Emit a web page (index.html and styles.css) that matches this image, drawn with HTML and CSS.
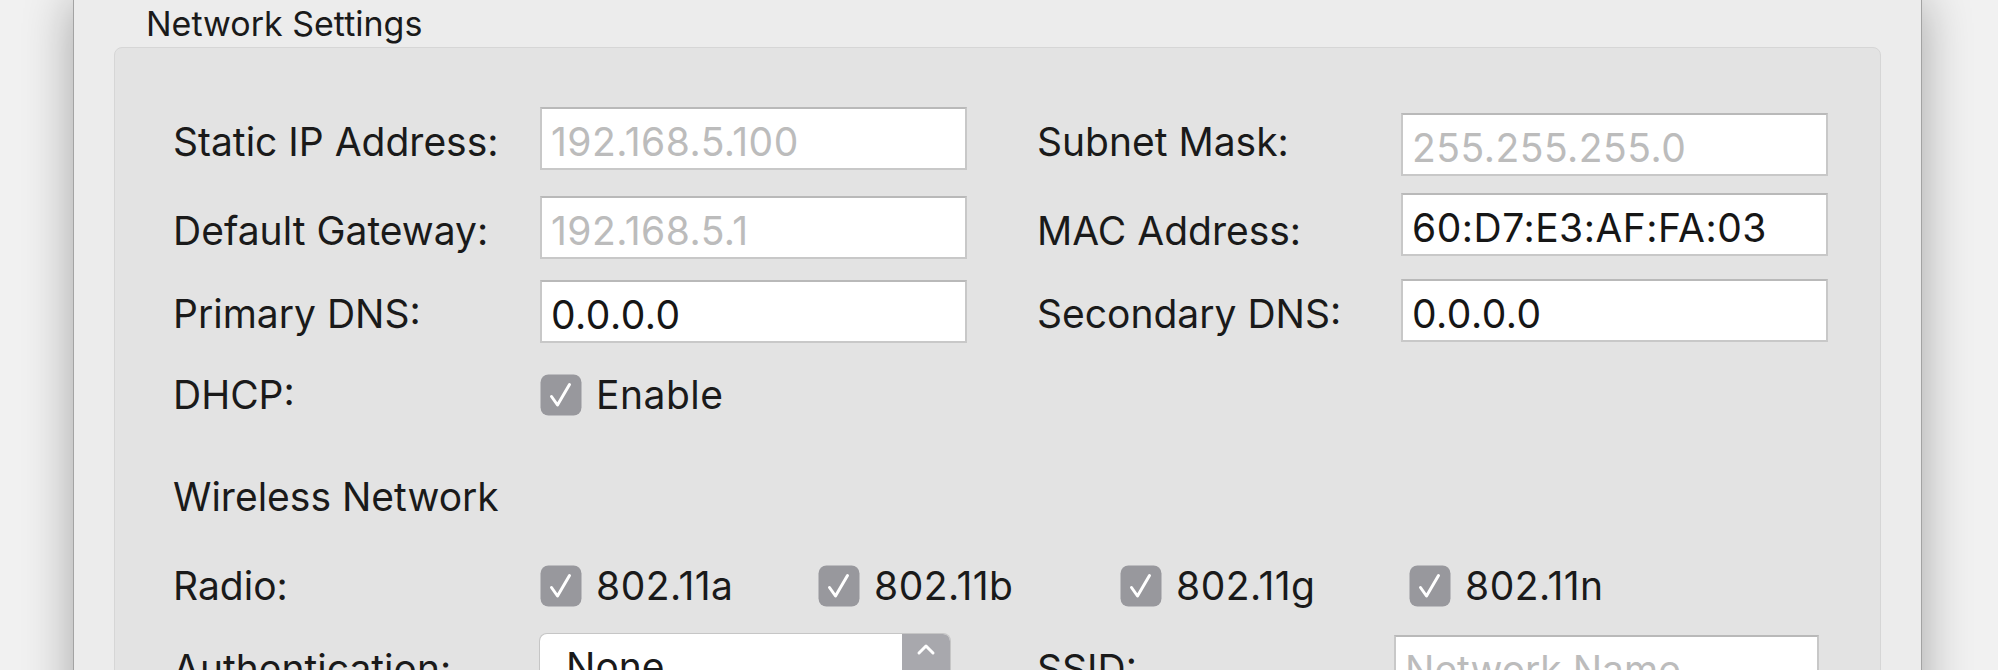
FILE: index.html
```html
<!DOCTYPE html>
<html>
<head>
<meta charset="utf-8">
<title>Network Settings</title>
<link rel="stylesheet" href="styles.css">
</head>
<body>
<div class="window">
  <div class="group-title">Network Settings</div>
  <div class="group">

    <div class="row row-1">
      <label class="label">Static IP Address:</label>
      <input class="field" type="text" placeholder="192.168.5.100">
      <label class="label label-right">Subnet Mask:</label>
      <input class="field down-6" type="text" placeholder="255.255.255.0">
    </div>

    <div class="row row-2">
      <label class="label">Default Gateway:</label>
      <input class="field down-3" type="text" placeholder="192.168.5.1">
      <label class="label label-right">MAC Address:</label>
      <input class="field" type="text" value="60:D7:E3:AF:FA:03">
    </div>

    <div class="row row-3">
      <label class="label">Primary DNS:</label>
      <input class="field down-1" type="text" value="0.0.0.0">
      <label class="label label-right">Secondary DNS:</label>
      <input class="field" type="text" value="0.0.0.0">
    </div>

    <div class="row row-dhcp">
      <label class="label">DHCP:</label>
      <div class="check">
        <svg class="box" width="42" height="42" viewBox="0 0 42 42"><rect x="0.5" y="0.5" width="41" height="41" rx="8" fill="#98989d"/><path d="M11.5 22.5 L17.5 31 L29.5 10.5" fill="none" stroke="#fff" stroke-width="3" stroke-linecap="round" stroke-linejoin="round"/></svg>
        <span>Enable</span>
      </div>
    </div>

    <div class="section">Wireless Network</div>

    <div class="row row-radio">
      <label class="label">Radio:</label>
      <div class="checks">
        <div class="check">
          <svg class="box" width="42" height="42" viewBox="0 0 42 42"><rect x="0.5" y="0.5" width="41" height="41" rx="8" fill="#98989d"/><path d="M11.5 22.5 L17.5 31 L29.5 10.5" fill="none" stroke="#fff" stroke-width="3" stroke-linecap="round" stroke-linejoin="round"/></svg>
          <span>802.11a</span>
        </div>
        <div class="check">
          <svg class="box" width="42" height="42" viewBox="0 0 42 42"><rect x="0.5" y="0.5" width="41" height="41" rx="8" fill="#98989d"/><path d="M11.5 22.5 L17.5 31 L29.5 10.5" fill="none" stroke="#fff" stroke-width="3" stroke-linecap="round" stroke-linejoin="round"/></svg>
          <span>802.11b</span>
        </div>
        <div class="check">
          <svg class="box" width="42" height="42" viewBox="0 0 42 42"><rect x="0.5" y="0.5" width="41" height="41" rx="8" fill="#98989d"/><path d="M11.5 22.5 L17.5 31 L29.5 10.5" fill="none" stroke="#fff" stroke-width="3" stroke-linecap="round" stroke-linejoin="round"/></svg>
          <span>802.11g</span>
        </div>
        <div class="check">
          <svg class="box" width="42" height="42" viewBox="0 0 42 42"><rect x="0.5" y="0.5" width="41" height="41" rx="8" fill="#98989d"/><path d="M11.5 22.5 L17.5 31 L29.5 10.5" fill="none" stroke="#fff" stroke-width="3" stroke-linecap="round" stroke-linejoin="round"/></svg>
          <span>802.11n</span>
        </div>
      </div>
    </div>

    <div class="row row-auth">
      <label class="label">Authentication:</label>
      <div class="select">
        <span class="select-value">None</span>
        <span class="stepper">
          <svg width="48" height="63" viewBox="0 0 48 63"><path d="M17 19 L24 12 L31 19" fill="none" stroke="#fff" stroke-width="3" stroke-linecap="round" stroke-linejoin="round"/><path d="M17 44 L24 51 L31 44" fill="none" stroke="#fff" stroke-width="3" stroke-linecap="round" stroke-linejoin="round"/></svg>
        </span>
      </div>
      <label class="label label-ssid">SSID:</label>
      <input class="field field-ssid" type="text" placeholder="Network Name">
    </div>

  </div>
</div>
</body>
</html>
```

FILE: styles.css
```css
html, body { margin: 0; height: 670px; overflow: hidden; }
body {
  background: #f1f1f1;
  font-family: Inter, "Liberation Sans", sans-serif;
  color: #1a1a1a;
}

.window {
  margin-left: 73px;
  width: 1849px;
  height: 760px;
  background: #ececec;
  border-left: 1px solid #a3a3a3;
  border-right: 1px solid #a3a3a3;
  box-shadow: 0 0 46px rgba(0, 0, 0, 0.32);
  padding: 0 40px 0 40px;
  box-sizing: border-box;
}

.group-title {
  font-size: 34px;
  line-height: 38px;
  padding: 5px 0 4px 32px;
}

.group {
  background: #e3e3e3;
  border: 1px solid #d6d6d6;
  border-radius: 8px;
  height: 700px;
  padding: 59px 0 0 58px;
  box-sizing: border-box;
}

.row { display: flex; align-items: center; }
.row-1 { height: 69px; }
.row-2 { height: 75px; margin-top: 17px; }
.row-3 { height: 69px; margin-top: 11px; }
.row-dhcp { height: 41px; margin-top: 26px; }
.row-radio { height: 42px; margin-top: 45px; }
.row-auth { height: 63px; margin-top: 27px; align-items: flex-start; }

.label {
  width: 367px;
  flex: none;
  font-size: 39px;
  line-height: 46px;
}
.label-right { width: 364px; margin-left: 70px; }
.label-ssid { width: 357px; margin-left: 87px; margin-top: 12px; }
.row-auth .label { margin-top: 12px; }

.field {
  width: 427px;
  height: 63px;
  flex: none;
  align-self: flex-start;
  box-sizing: border-box;
  border: 2px solid #c8c8c8;
  border-top-color: #b9b9b9;
  background: #fff;
  font-family: Inter, "Liberation Sans", sans-serif;
  font-size: 39px;
  letter-spacing: 0.5px;
  color: #161616;
  padding: 6px 0 0 9px;
  margin: 0;
  outline: none;
}
.field::placeholder { color: #bcbcbc; }
.down-6 { margin-top: 6px; }
.down-3 { margin-top: 3px; }
.down-1 { margin-top: 1px; }
.field-ssid { margin-top: 1px; width: 425px; letter-spacing: 0; }

.section {
  font-size: 39px;
  line-height: 46px;
  margin-top: 59px;
}

.checks {
  display: grid;
  grid-template-columns: 278px 302px 289px auto;
}

.check {
  display: flex;
  align-items: center;
  gap: 14px;
  font-size: 39px;
  letter-spacing: 0.5px;
  line-height: 42px;
}
.box { flex: none; display: block; }

.select {
  width: 410px;
  height: 63px;
  flex: none;
  display: flex;
  background: #fff;
  border-radius: 7px;
  box-shadow: 0 0 0 1px #c6c6c6, 0 1px 1px rgba(0, 0, 0, 0.15);
  overflow: hidden;
}
.select-value {
  flex: 1;
  font-size: 39px;
  line-height: 46px;
  padding: 10px 0 0 26px;
}
.stepper {
  width: 48px;
  background: #a8a8ad;
  display: block;
}
.stepper svg { display: block; }
```
